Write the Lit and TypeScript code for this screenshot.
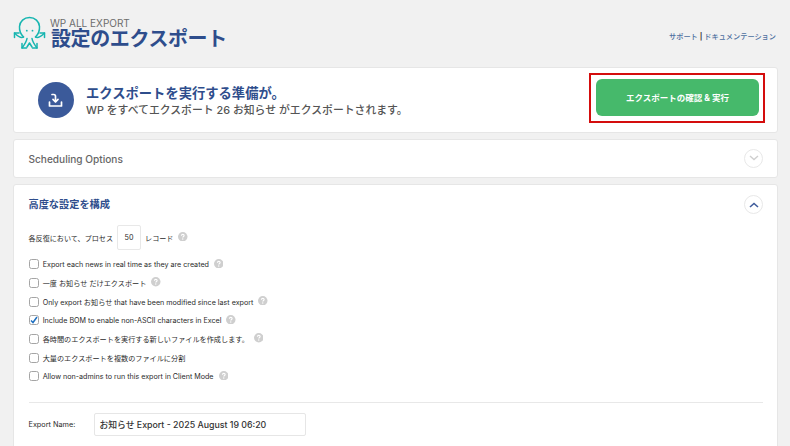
import { LitElement, html, css } from "lit";
import { customElement } from "lit/decorators.js";

const help = html`<svg class="help" viewBox="0 0 10 10" width="9.500" height="9.500"><circle cx="5" cy="5" r="5" fill="#cfcfcf"/><path d="M3.500 3.900C3.600 3 4.200 2.500 5 2.500C5.900 2.500 6.500 3 6.500 3.700C6.500 4.700 5 4.700 5 5.900" fill="none" stroke="#fff" stroke-width="1.100"/><circle cx="5" cy="7.400" r=".7" fill="#fff"/></svg>`;

const options: { label: string; checked?: boolean; help: boolean }[] = [
  { label: "Export each news in real time as they are created", help: true },
  { label: "一度 お知らせ だけエクスポート", help: true },
  { label: "Only export お知らせ that have been modified since last export", help: true },
  { label: "Include BOM to enable non-ASCII characters in Excel", checked: true, help: true },
  { label: "各時間のエクスポートを実行する新しいファイルを作成します。", help: true },
  { label: "大量のエクスポートを複数のファイルに分割", help: false },
  { label: "Allow non-admins to run this export in Client Mode", help: true },
];

@customElement("app-root")
export class AppRoot extends LitElement {
  static styles = css`
    :host {
      display: block;
      width: 790px;
      height: 446px;
      overflow: hidden;
      background: #f1f1f1;
      font-family: Inter, "Noto Sans CJK JP", sans-serif;
      color: #444;
    }
    .page { padding: 0 12px 0 13px; }
    .head {
      height: 67px;
      display: flex;
      align-items: flex-start;
      justify-content: space-between;
    }
    .brand { display: flex; margin-top: 16px; gap: 4px; }
    .brand-text { display: flex; flex-direction: column; }
    .kicker { font-size: 10px; line-height: 12px; color: #6d6d6d; margin-top: 1px; }
    .title { font-size: 20px; line-height: 18px; font-weight: 700; color: #2e4d8c; margin-top: 1px; margin-left: 1px; letter-spacing: -.4px; }
    .links { font-size: 7.200px; line-height: 10px; margin-top: 32px; color: #4d6f9f; font-weight: 500; padding-right: 2px; }
    .links b { color: #444; font-weight: 700; }
    .card {
      background: #fff;
      border: 1px solid #e6e6e6;
      border-radius: 3px;
      box-sizing: border-box;
    }
    .ready {
      height: 66px;
      display: flex;
      align-items: center;
      justify-content: space-between;
      padding: 0 12px 0 23.500px;
    }
    .ready-left { display: flex; align-items: center; gap: 12.500px; }
    .disc {
      width: 36px; height: 36px; border-radius: 50%;
      background: #3b5a9a;
      display: flex; align-items: center; justify-content: center;
    }
    .ready-text { padding-top: 3px; }
    .ready h2 { margin: 0; font-size: 13.300px; line-height: 17px; font-weight: 700; color: #2e4d8c; }
    .ready p { margin: 0; font-size: 10.850px; line-height: 17px; font-weight: 500; color: #555; }
    .hilite {
      border: 2px solid #d40d0d;
      padding: 4px 4px 5px 5px;
      margin-bottom: 5px;
    }
    .go {
      width: 163px; height: 37px;
      background: #46b96b;
      border-radius: 6px;
      color: #fff;
      font-size: 8.500px;
      font-weight: 700;
      display: flex; align-items: center; justify-content: center;
    }
    .sched {
      height: 38.500px;
      margin-top: 6px;
      display: flex; align-items: center; justify-content: space-between;
      padding: 0 14px 0 14.500px;
    }
    .sched span { font-size: 10.100px; font-weight: 500; color: #666; padding-top: 2px; }
    .round {
      width: 19px; height: 19px; border-radius: 50%;
      box-sizing: border-box;
      border: 1px solid #e8e8e8;
      background: #fff;
      display: flex; align-items: center; justify-content: center;
    }
    .adv { margin-top: 6.500px; height: 300px; padding: 0 14px 0 14.500px; }
    .adv-head {
      display: flex; align-items: center; justify-content: space-between;
      height: 37px;
    }
    .adv-head .round { margin-top: 2px; }
    .adv-head h3 { margin: 0; font-size: 10.200px; font-weight: 700; color: #2e4d8c; }
    .iter { display: flex; align-items: center; height: 25px; margin-top: 3px; font-size: 7.100px; color: #2a2a2a; }
    .num {
      width: 24px; height: 25px; box-sizing: border-box;
      border: 1px solid #e8e8e8; border-radius: 2px;
      display: flex; align-items: center; justify-content: center;
      margin: 0 4px; font-size: 7.200px;
    }
    .help { flex: none; margin-left: 5px; margin-top: -2px; }
    .iter .help { margin-left: 5px; }
    .opts { margin-top: 5px; }
    .opt { display: flex; align-items: center; height: 18.700px; font-size: 7.150px; color: #2a2a2a; }
    .box {
      width: 10px; height: 10px; flex: none; box-sizing: border-box;
      border: 1px solid #a5a5a5; border-radius: 2.500px;
      margin-right: 4.200px;
      display: flex; align-items: center; justify-content: center;
      background: #fff;
    }
    .sep { border-top: 1px solid #e8e8e8; margin-top: 16px; }
    .name { display: flex; align-items: center; margin-top: 10px; font-size: 7.300px; color: #2a2a2a; }
    .name label { width: 65px; }
    .field {
      width: 212px; height: 23.500px; box-sizing: border-box;
      border: 1px solid #e6e6e6; border-radius: 2px;
      padding-left: 5px; display: flex; align-items: center;
      font-size: 8.800px; color: #333; font-weight: 500;
    }
  `;

  render() {
    return html`
      <div class="page">
        <div class="head">
          <div class="brand">
            <svg width="33" height="34" viewBox="0 0 33 34" fill="none" stroke="#16b5b0" stroke-width="1.500" stroke-linecap="round" stroke-linejoin="round">
              <path d="M10.500 21C7.500 18 6.300 14 6.500 10.500C6.800 5.500 11 1.500 16.500 1.500C22 1.500 26.200 5.500 26.500 10.500C26.700 14 25.500 18 22.500 21"/>
              <path d="M10.500 21C8.500 22.500 5.500 21 1.500 17"/>
              <path d="M22.500 21C24.500 22.500 27.500 21 31.500 17"/>
              <path d="M1.500 21.500V17H6"/>
              <path d="M31.500 21.500V17H27"/>
              <path d="M14 22.500C13.500 26 12 28 9 32"/>
              <path d="M19 22.500C19.500 26 21 28 24 32"/>
              <path d="M9 27.500V32H13.500"/>
              <path d="M24 27.500V32H19.500"/>
              <path d="M14 31L16.500 27L19 31"/>
              <circle cx="13.800" cy="14.700" r=".9" fill="#16b5b0" stroke="none"/>
              <circle cx="19.500" cy="14.700" r=".9" fill="#16b5b0" stroke="none"/>
            </svg>
            <div class="brand-text">
              <div class="kicker">WP ALL EXPORT</div>
              <div class="title">設定のエクスポート</div>
            </div>
          </div>
          <div class="links">サポート <b>|</b> ドキュメンテーション</div>
        </div>

        <div class="card ready">
          <div class="ready-left">
            <div class="disc">
              <svg width="15" height="15" viewBox="0 0 15 15" fill="none" stroke="#fff" stroke-width="1.700" stroke-linecap="round" stroke-linejoin="round">
                <path d="M4 1.500H5.700Q7.500 1.500 7.500 3.300V8.500"/>
                <path d="M5 6.300L7.500 8.800L10 6.300"/>
                <path d="M1.500 9V13H13.500V9"/>
              </svg>
            </div>
            <div class="ready-text">
              <h2>エクスポートを実行する準備が。</h2>
              <p>WP をすべてエクスポート 26 お知らせ がエクスポートされます。</p>
            </div>
          </div>
          <div class="hilite"><div class="go">エクスポートの確認 &amp; 実行</div></div>
        </div>

        <div class="card sched">
          <span>Scheduling Options</span>
          <div class="round">
            <svg width="10" height="6" viewBox="0 0 10 6" fill="none" stroke="#cfcfcf" stroke-width="1.400"><path d="M1 1L5 4.500L9 1"/></svg>
          </div>
        </div>

        <div class="card adv">
          <div class="adv-head">
            <h3>高度な設定を構成</h3>
            <div class="round">
              <svg width="10" height="6" viewBox="0 0 10 6" fill="none" stroke="#3f5c9c" stroke-width="1.600"><path d="M1 5L5 1.500L9 5"/></svg>
            </div>
          </div>
          <div class="iter">各反復において、プロセス<div class="num">50</div>レコード ${help}</div>
          <div class="opts">
            ${options.map(
              (o) => html`<div class="opt">
                <span class="box">${o.checked
                  ? html`<svg width="8" height="8" viewBox="0 0 8 8" fill="none" stroke="#1e6fc0" stroke-width="1.500"><path d="M1 4.500L3 6.500L7 1"/></svg>`
                  : ""}</span>
                ${o.label} ${o.help ? help : ""}
              </div>`
            )}
          </div>
          <div class="sep"></div>
          <div class="name">
            <label>Export Name:</label>
            <div class="field">お知らせ Export - 2025 August 19 06:20</div>
          </div>
        </div>
      </div>
    `;
  }
}
